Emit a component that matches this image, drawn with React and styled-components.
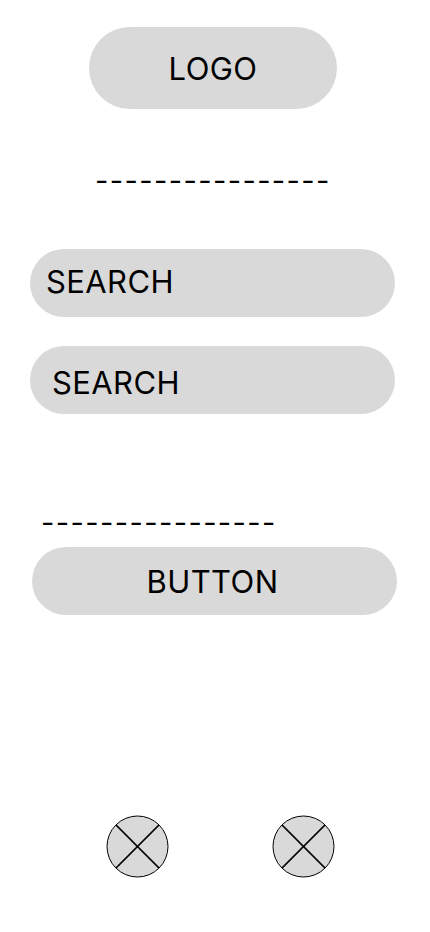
import React from "react";
import styled, { createGlobalStyle } from "styled-components";

const Global = createGlobalStyle`
  html, body { margin: 0; padding: 0; background: #ffffff; }
  body { font-family: Inter, "Liberation Sans", sans-serif; color: #000; }
`;

const Page = styled.div`
  width: 430px;
  height: 932px;
  box-sizing: border-box;
  padding-top: 27px;
  display: flex;
  flex-direction: column;
  align-items: flex-start;
`;

const Pill = styled.div`
  box-sizing: border-box;
  width: ${(p) => p.$w}px;
  height: ${(p) => p.$h}px;
  margin-left: ${(p) => p.$x}px;
  margin-top: ${(p) => p.$mt || 0}px;
  border-radius: ${(p) => p.$h / 2}px;
  background: #d9d9d9;
  display: flex;
  align-items: center;
  justify-content: ${(p) => (p.$center ? "center" : "flex-start")};
  padding-left: ${(p) => p.$pl || 0}px;
  padding-right: ${(p) => p.$pr || 0}px;
  padding-top: ${(p) => Math.max(p.$dy || 0, 0)}px;
  padding-bottom: ${(p) => Math.max(-(p.$dy || 0), 0)}px;
  font-size: 31px;
  line-height: 1;
  letter-spacing: 0.4px;
`;

const Dashes = styled.div`
  margin-left: ${(p) => p.$x}px;
  margin-top: ${(p) => p.$mt}px;
  font-size: 29px;
  line-height: 30px;
  height: 30px;
  letter-spacing: 1.4px;
  white-space: nowrap;
`;

const IconRow = styled.div`
  margin-top: 200px;
  margin-left: 106px;
  display: flex;
  gap: 103px;
`;

const CrossCircle = () => (
  <svg width="63" height="63" viewBox="0 0 63 63">
    <circle cx="31.5" cy="31.5" r="30.5" fill="#d9d9d9" stroke="#000" strokeWidth="1" />
    <line x1="9.9" y1="9.9" x2="53.1" y2="53.1" stroke="#000" strokeWidth="1.5" />
    <line x1="53.1" y1="9.9" x2="9.9" y2="53.1" stroke="#000" strokeWidth="1.5" />
  </svg>
);

export default function App() {
  return (
    <>
      <Global />
      <Page>
        <Pill $w={248} $h={82} $x={89} $center>LOGO</Pill>
        <Dashes $x={95} $mt={57}>----------------</Dashes>
        <Pill $w={365} $h={68} $x={30} $mt={53} $pl={16} $dy={-4}>SEARCH</Pill>
        <Pill $w={365} $h={68} $x={30} $mt={29} $pl={22} $dy={4}>SEARCH</Pill>
        <Dashes $x={41} $mt={94}>----------------</Dashes>
        <Pill $w={365} $h={68} $x={32} $mt={9} $pr={4} $center>BUTTON</Pill>
        <IconRow>
          <CrossCircle />
          <CrossCircle />
        </IconRow>
      </Page>
    </>
  );
}
